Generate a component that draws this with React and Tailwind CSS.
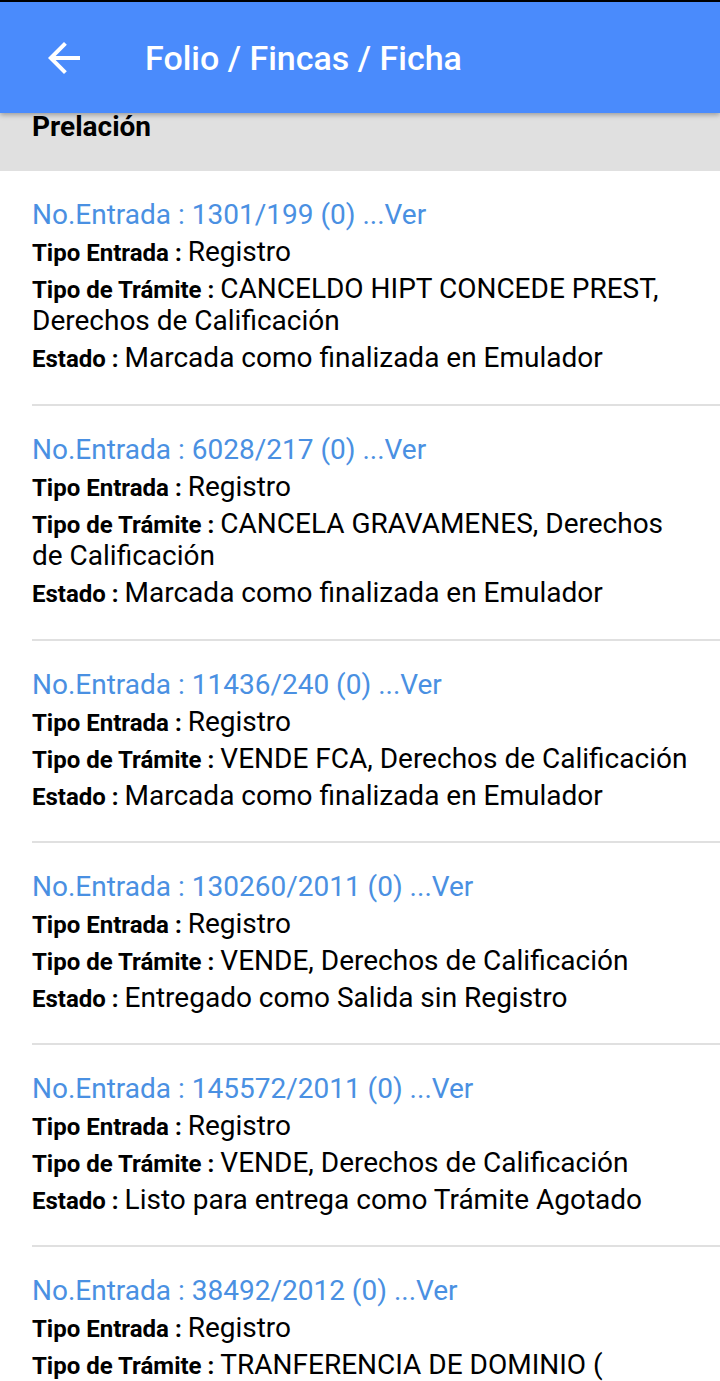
import React from 'react';

const ENTRIES = [
  { no: '1301/199 (0)', tipo: 'Registro', tramite: 'CANCELDO HIPT CONCEDE PREST, Derechos de Calificación', estado: 'Marcada como finalizada en Emulador', wraps: true },
  { no: '6028/217 (0)', tipo: 'Registro', tramite: 'CANCELA GRAVAMENES, Derechos de Calificación', estado: 'Marcada como finalizada en Emulador', wraps: true },
  { no: '11436/240 (0)', tipo: 'Registro', tramite: 'VENDE FCA, Derechos de Calificación', estado: 'Marcada como finalizada en Emulador' },
  { no: '130260/2011 (0)', tipo: 'Registro', tramite: 'VENDE, Derechos de Calificación', estado: 'Entregado como Salida sin Registro' },
  { no: '145572/2011 (0)', tipo: 'Registro', tramite: 'VENDE, Derechos de Calificación', estado: 'Listo para entrega como Trámite Agotado' },
  { no: '38492/2012 (0)', tipo: 'Registro', tramite: 'TRANFERENCIA DE DOMINIO ( Derechos de Calificación', estado: 'Marcada como finalizada en Emulador', wraps: true },
];

function Field({ label, children }) {
  return (
    <p className="text-[28px] leading-[32px] text-black">
      <span className="text-[24px] leading-none font-bold">{label} : </span>
      {children}
    </p>
  );
}

export default function App() {
  return (
    <div className="h-[1381px] overflow-hidden bg-white font-['Roboto',sans-serif]">
      <div className="h-[2px] bg-black" />
      {/* header */}
      <div className="relative z-10 h-[111px] bg-[#4a8bfc] flex items-center shadow-[0_2px_5px_rgba(0,0,0,0.3)]">
        <svg viewBox="0 0 24 24" className="w-[48px] h-[48px] ml-[40px] fill-white">
          <path d="M20 11H7.83l5.59-5.59L12 4l-8 8 8 8 1.41-1.41L7.83 13H20v-2z" />
        </svg>
        <h1 className="ml-[57px] text-[34px] leading-[40px] font-medium text-white">Folio / Fincas / Ficha</h1>
      </div>

      {/* section title */}
      <div className="h-[58px] bg-[#e0e0e0] px-[32px]">
        <h2 className="text-[28px] leading-[28px] font-bold text-black">Prelación</h2>
      </div>

      {/* list */}
      <div className="pl-[32px]">
        {ENTRIES.map((e, i) => (
          <div key={i} className={`border-b-2 border-[#e0e0e0] pt-[28px] pr-[28px] flex flex-col gap-[5px] ${e.wraps ? 'pb-[30px]' : 'pb-[29px]'}`}>
            <p className="text-[28px] leading-[32px] text-[#4a90e2]">No.Entrada : {e.no} ...Ver</p>
            <Field label="Tipo Entrada">{e.tipo}</Field>
            <Field label="Tipo de Trámite">{e.tramite}</Field>
            <Field label="Estado">{e.estado}</Field>
          </div>
        ))}
      </div>
    </div>
  );
}
